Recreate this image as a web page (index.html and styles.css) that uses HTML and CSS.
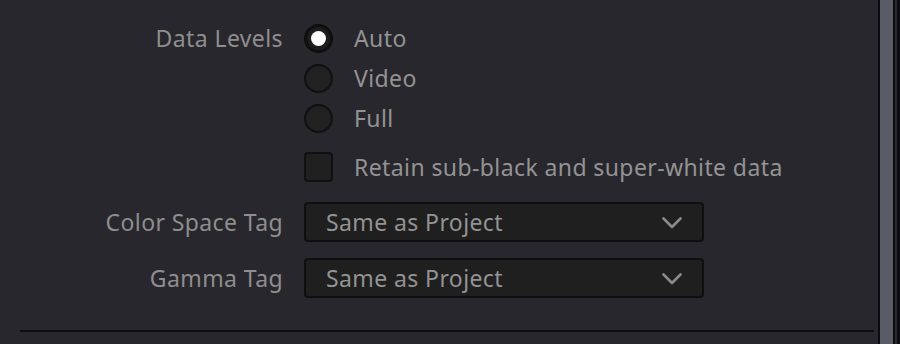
FILE: index.html
```html
<!DOCTYPE html>
<html>
<head>
<meta charset="utf-8">
<link rel="stylesheet" href="styles.css">
</head>
<body>
<div class="app">
  <div class="panel">
    <div class="form">
      <div class="label label-top">Data Levels</div>
      <div class="options">
        <div class="opt"><span class="radio checked"></span><span class="opt-text">Auto</span></div>
        <div class="opt"><span class="radio"></span><span class="opt-text">Video</span></div>
        <div class="opt"><span class="radio"></span><span class="opt-text">Full</span></div>
      </div>

      <div class="label check-label"></div>
      <div class="opt check-row"><span class="checkbox"></span><span class="opt-text">Retain sub-black and super-white data</span></div>

      <div class="label sel-row1">Color Space Tag</div>
      <div class="select sel-row1"><span class="sel-text">Same as Project</span>
        <svg class="chev" width="20" height="12" viewBox="0 0 20 12"><polyline points="1.5,1.5 10,10 18.5,1.5" fill="none" stroke="#8a8a8a" stroke-width="2.6" stroke-linecap="round" stroke-linejoin="round"/></svg>
      </div>

      <div class="label sel-row2">Gamma Tag</div>
      <div class="select sel-row2"><span class="sel-text">Same as Project</span>
        <svg class="chev" width="20" height="12" viewBox="0 0 20 12"><polyline points="1.5,1.5 10,10 18.5,1.5" fill="none" stroke="#8a8a8a" stroke-width="2.6" stroke-linecap="round" stroke-linejoin="round"/></svg>
      </div>
    </div>
    <div class="divider"></div>
  </div>
  <div class="scroll">
    <div class="edge"></div>
    <div class="thumb"></div>
    <div class="edge2"></div>
    <div class="edge3"></div>
    <div class="edge4"></div>
  </div>
</div>
</body>
</html>
```

FILE: styles.css
```css
html, body {
  margin: 0;
  padding: 0;
  background: #28272d;
  height: 100%;
  overflow: hidden;
}
.app {
  display: flex;
  height: 344px;
  font-family: "Noto Sans", "Open Sans", sans-serif;
  font-size: 23px;
  letter-spacing: 0.4px;
  color: #8e8e8e;
}
.panel {
  flex: 1;
  padding-top: 18px;
}
.form {
  display: grid;
  grid-template-columns: 283px 400px;
  column-gap: 21px;
}
.label {
  text-align: right;
  height: 40px;
  line-height: 40px;
  white-space: nowrap;
}
.options {
  display: flex;
  flex-direction: column;
}
.opt {
  display: flex;
  align-items: center;
  height: 40px;
  gap: 21px;
}
.opt-text {
  color: #939393;
  white-space: nowrap;
}
.radio {
  flex-shrink: 0;
  width: 29px;
  height: 29px;
  box-sizing: border-box;
  border-radius: 50%;
  border: 2px solid #101012;
  background: #212121;
  display: flex;
  align-items: center;
  justify-content: center;
}
.radio.checked {
  border: 3px solid #0f0f10;
  background: #1c1c1c;
}
.radio.checked::after {
  content: "";
  width: 15px;
  height: 15px;
  border-radius: 50%;
  background: #ffffff;
}
.check-row, .check-label {
  margin-top: 9px;
}
.checkbox {
  flex-shrink: 0;
  width: 29px;
  height: 30px;
  box-sizing: border-box;
  border: 2px solid #101012;
  border-radius: 4px;
  background: #202020;
}
.sel-row1 {
  margin-top: 15px;
}
.sel-row2 {
  margin-top: 16px;
}
.select {
  height: 40px;
  box-sizing: border-box;
  border: 2px solid #0f0f10;
  border-radius: 4px;
  background: #1f1f1f;
  display: flex;
  align-items: center;
  padding-left: 20px;
  padding-right: 20px;
}
.sel-text {
  flex: 1;
  color: #939393;
  white-space: nowrap;
}
.chev {
  display: block;
  margin-top: 1px;
}
.divider {
  height: 2px;
  background: #0e0e10;
  margin: 32px 4px 0 20px;
}
.scroll {
  display: flex;
  height: 100%;
}
.edge {
  width: 2px;
  background: #0c0c0e;
}
.thumb {
  width: 13px;
  background: #595c66;
}
.edge2 {
  width: 2px;
  background: #0c0c0e;
}
.edge3 {
  width: 2px;
  background: #2a2a30;
}
.edge4 {
  width: 3px;
  background: #0c0c0e;
}
```
